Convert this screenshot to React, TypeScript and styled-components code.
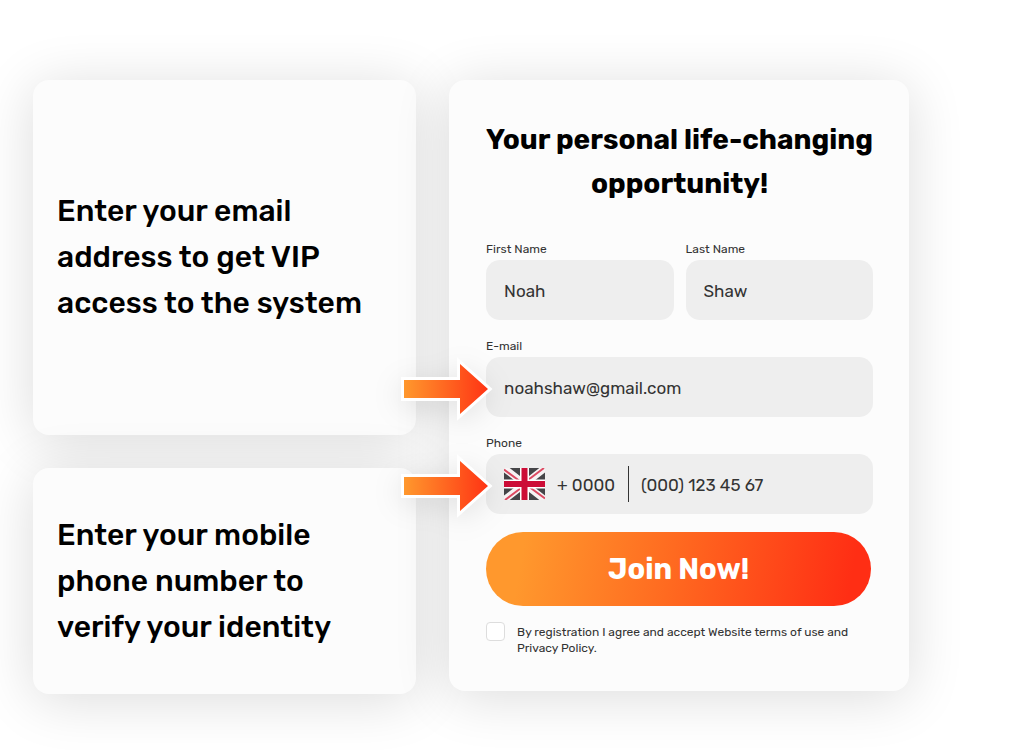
import React from "react";
import styled, { createGlobalStyle } from "styled-components";

const GlobalStyle = createGlobalStyle`
  *, *::before, *::after { box-sizing: border-box; }
  body {
    margin: 0;
    background: #fff;
    color: #000;
    font-family: Rubik, Inter, "Liberation Sans", sans-serif;
  }
  input, button { font: inherit; color: inherit; }
`;

const Page = styled.main`
  display: grid;
  grid-template-columns: 5fr 6fr;
  gap: 33px;
  align-items: start;
  padding: 80px 115px 56px 33px;
`;

const Steps = styled.div`
  display: grid;
  gap: 33px;
`;

const Card = styled.section`
  background: #fcfcfc;
  border-radius: 16px;
  box-shadow: 0 6px 56px rgba(0, 0, 0, 0.14);
`;

const StepCard = styled(Card)<{ $tall?: boolean }>`
  display: flex;
  align-items: center;
  min-height: ${(p) => (p.$tall ? 355 : 226)}px;
  padding: 24px 24px 25px;
`;

const StepText = styled.h2`
  margin: 0;
  max-width: 320px;
  font-size: 30px;
  font-weight: 550;
  line-height: 46px;
`;

const FormCard = styled(Card)`
  padding: 38px 36px 35px 37px;
`;

const Title = styled.h1`
  margin: 0 0 35px;
  font-size: 28px;
  font-weight: 700;
  line-height: 44px;
  text-align: center;
  white-space: nowrap;
`;

const Form = styled.form`
  display: grid;
  gap: 18px;
`;

const NameRow = styled.div`
  display: grid;
  grid-template-columns: 1fr 1fr;
  gap: 12px;
`;

const Field = styled.div`
  display: grid;
  gap: 3px;
`;

const Label = styled.label`
  font-size: 12px;
  line-height: 16px;
  color: #333;
`;

const Control = styled.div`
  position: relative;
  display: flex;
  align-items: center;
  gap: 12px;
  height: 60px;
  padding: 0 18px;
  border-radius: 14px;
  background: #eee;
`;

const TextInput = styled.input`
  flex: 1;
  min-width: 0;
  width: 100%;
  padding: 2px 0 0;
  border: 0;
  outline: 0;
  background: transparent;
  font-size: 17px;
  line-height: 24px;
  color: #333;
`;

const CodeInput = styled(TextInput)`
  flex: 0 0 59px;
`;

const Divider = styled.span`
  width: 1px;
  height: 36px;
  background: #333;
`;

const ArrowSvg = styled.svg`
  position: absolute;
  top: 0;
  right: 100%;
  width: 88px;
  height: 64px;
  overflow: visible;
  filter: drop-shadow(0 6px 14px rgba(0, 0, 0, 0.1));
`;

const SubmitButton = styled.button`
  height: 74px;
  margin-right: 2px;
  border: 0;
  border-radius: 37px;
  background: linear-gradient(100deg, #ff982d 10%, #ff6a20 48%, #ff2e14 94%);
  color: #fff;
  font-size: 29px;
  font-weight: 700;
`;

const Consent = styled.div`
  display: flex;
  align-items: flex-start;
  gap: 12px;
`;

const Checkbox = styled.input`
  appearance: none;
  flex: none;
  width: 19px;
  height: 19px;
  margin: -2px 0 0;
  border: 1px solid #ddd;
  border-radius: 4px;
  background: #fff;
`;

const ConsentText = styled.label`
  font-size: 12px;
  line-height: 16px;
  color: #333;
`;

function Arrow({ id }: { id: string }) {
  return (
    <ArrowSvg viewBox="0 0 88 64" aria-hidden="true">
      <defs>
        <linearGradient id={id} x1="0" x2="1" y1="0" y2="0">
          <stop offset="0" stopColor="#ff982d" />
          <stop offset="1" stopColor="#ff3414" />
        </linearGradient>
      </defs>
      <path
        d="M6 23H62V7L90 32L62 57V41H6Z"
        fill={`url(#${id})`}
        stroke="#fff"
        strokeWidth="6"
        paintOrder="stroke"
      />
    </ArrowSvg>
  );
}

function Flag() {
  return (
    <svg width="41" height="32" viewBox="0 0 41 32" aria-hidden="true">
      <rect width="41" height="32" fill="#454548" />
      <path d="M0 0L41 32M41 0L0 32" stroke="#f6f3f4" strokeWidth="7" />
      <path d="M0 1.5L17 14M24 18L41 30.500M40 0L24 12M17 20L1 32" stroke="#dc4a62" strokeWidth="2" />
      <path d="M20.500 0V32M0 16H41" stroke="#fff" strokeWidth="9" />
      <path d="M20.500 0V32M0 16H41" stroke="#cc0c36" strokeWidth="6" />
    </svg>
  );
}

export default function App() {
  return (
    <>
      <GlobalStyle />
      <Page>
        <Steps>
          <StepCard $tall>
            <StepText>Enter your email address to get VIP access to the system</StepText>
          </StepCard>
          <StepCard>
            <StepText>Enter your mobile phone number to verify your identity</StepText>
          </StepCard>
        </Steps>
        <FormCard>
          <Title>
            Your personal life-changing
            <br />
            opportunity!
          </Title>
          <Form onSubmit={(e) => e.preventDefault()}>
            <NameRow>
              <Field>
                <Label htmlFor="first">First Name</Label>
                <Control>
                  <TextInput id="first" defaultValue="Noah" />
                </Control>
              </Field>
              <Field>
                <Label htmlFor="last">Last Name</Label>
                <Control>
                  <TextInput id="last" defaultValue="Shaw" />
                </Control>
              </Field>
            </NameRow>
            <Field>
              <Label htmlFor="email">E-mail</Label>
              <Control>
                <Arrow id="arrow-email" />
                <TextInput id="email" type="email" defaultValue="noahshaw@gmail.com" />
              </Control>
            </Field>
            <Field>
              <Label htmlFor="phone">Phone</Label>
              <Control>
                <Arrow id="arrow-phone" />
                <Flag />
                <CodeInput aria-label="Country code" defaultValue="+ 0000" />
                <Divider />
                <TextInput id="phone" type="tel" defaultValue="(000) 123 45 67" />
              </Control>
            </Field>
            <SubmitButton type="submit">Join Now!</SubmitButton>
            <Consent>
              <Checkbox id="agree" type="checkbox" />
              <ConsentText htmlFor="agree">
                By registration I agree and accept Website terms of use and Privacy Policy.
              </ConsentText>
            </Consent>
          </Form>
        </FormCard>
      </Page>
    </>
  );
}
